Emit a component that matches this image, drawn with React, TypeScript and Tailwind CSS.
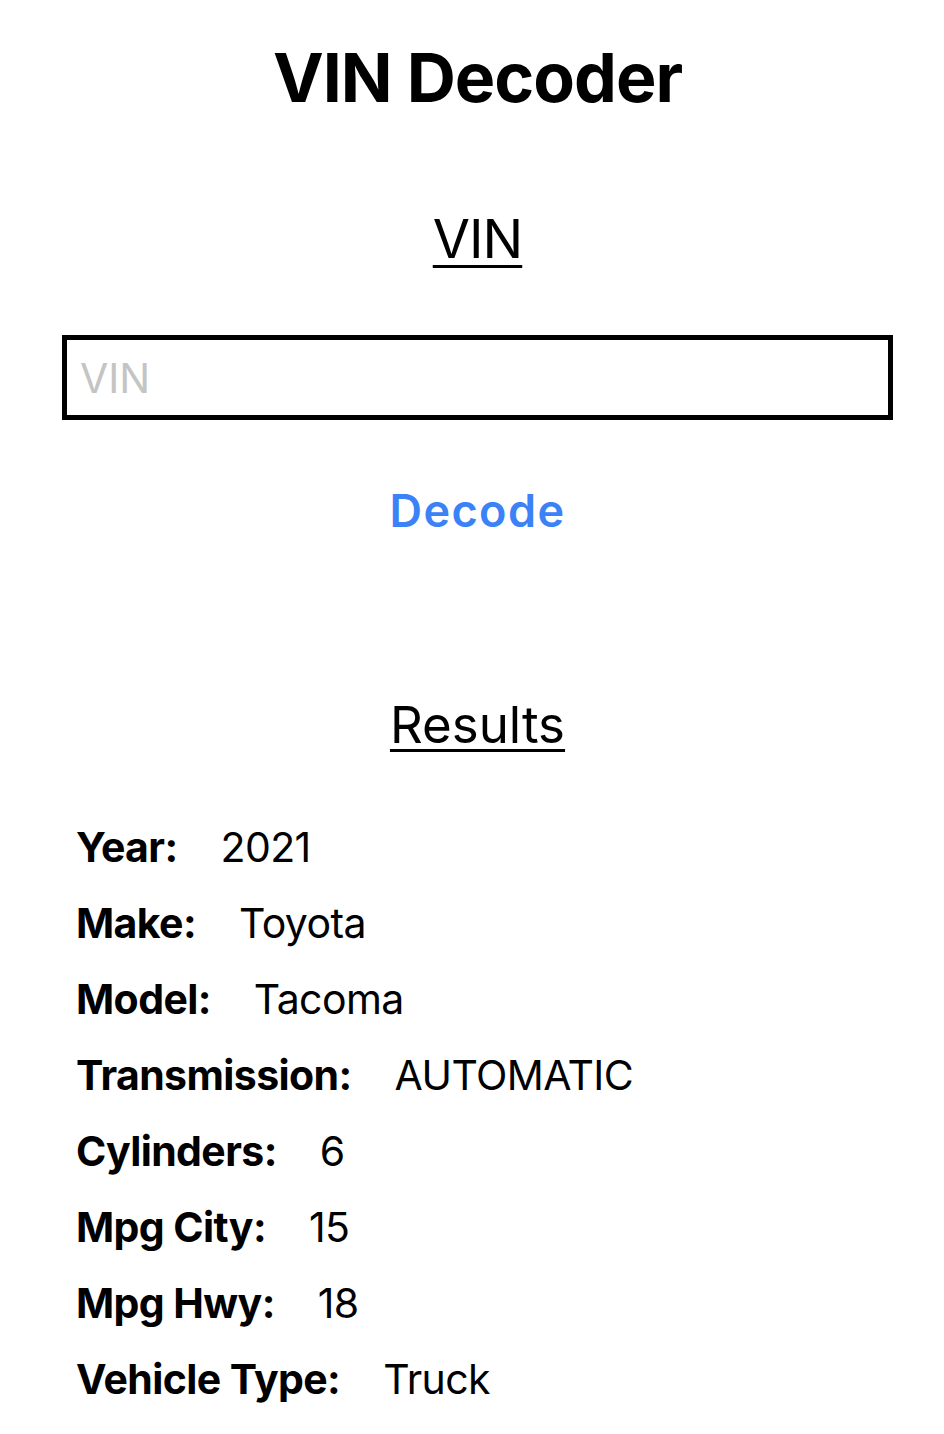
import React from 'react';

type Row = { label: string; value: string };

const rows: Row[] = [
  { label: 'Year:', value: '2021' },
  { label: 'Make:', value: 'Toyota' },
  { label: 'Model:', value: 'Tacoma' },
  { label: 'Transmission:', value: 'AUTOMATIC' },
  { label: 'Cylinders:', value: '6' },
  { label: 'Mpg City:', value: '15' },
  { label: 'Mpg Hwy:', value: '18' },
  { label: 'Vehicle Type:', value: 'Truck' },
];

const App = () => {
  return (
    <main
      className="min-h-screen bg-white text-black pl-[62px] pr-[51px] pt-[36px]"
      style={{ fontFamily: 'Inter, "Noto Sans", sans-serif' }}
    >
      <h1 className="text-center font-bold text-[68px] leading-[82px] tracking-[-1px]">VIN Decoder</h1>

      <h2 className="mt-[89px] text-center text-[54px] leading-[64px] tracking-[-1px] underline decoration-[3px] underline-offset-[7px]">
        VIN
      </h2>

      <input
        type="text"
        placeholder="VIN"
        className="mt-[64px] block w-full h-[85px] border-[5px] border-black pl-[13px] text-[41px] outline-none placeholder:text-[#c4c4c4]"
      />

      <div className="mt-[65px] flex justify-center">
        <button type="button" className="text-[45px] leading-[52px] font-semibold tracking-[1.4px] text-[#3b82f6]">
          Decode
        </button>
      </div>

      <h2 className="mt-[158px] text-center text-[51px] leading-[60px] underline decoration-[3px] underline-offset-[6px]">
        Results
      </h2>

      <div className="mt-[54px] pl-[14px] flex flex-col">
        {rows.map((row) => (
          <div key={row.label} className="flex gap-[43px] text-[41px] leading-[76px] tracking-[-0.6px]">
            <span className="font-bold">{row.label}</span>
            <span>{row.value}</span>
          </div>
        ))}
      </div>
    </main>
  );
};

export default App;
